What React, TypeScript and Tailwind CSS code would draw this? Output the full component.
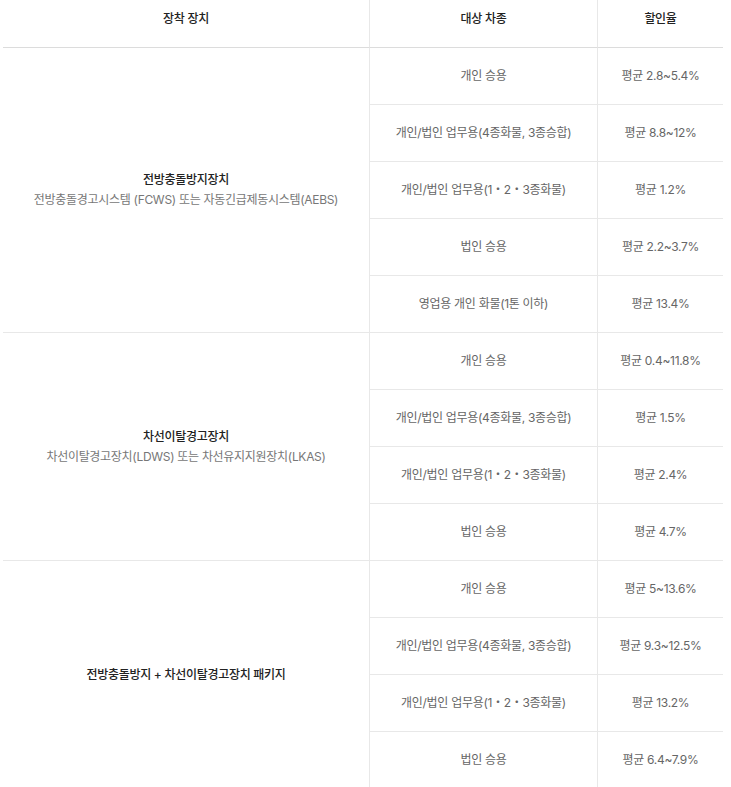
import React from "react";

type Group = { title: string; sub?: string; rows: [string, string][] };

const groups: Group[] = [
  {
    title: "전방충돌방지장치",
    sub: "전방충돌경고시스템 (FCWS) 또는 자동긴급제동시스템(AEBS)",
    rows: [
      ["개인 승용", "평균 2.8~5.4%"],
      ["개인/법인 업무용(4종화물, 3종승합)", "평균 8.8~12%"],
      ["개인/법인 업무용(1・2・3종화물)", "평균 1.2%"],
      ["법인 승용", "평균 2.2~3.7%"],
      ["영업용 개인 화물(1톤 이하)", "평균 13.4%"],
    ],
  },
  {
    title: "차선이탈경고장치",
    sub: "차선이탈경고장치(LDWS) 또는 차선유지지원장치(LKAS)",
    rows: [
      ["개인 승용", "평균 0.4~11.8%"],
      ["개인/법인 업무용(4종화물, 3종승합)", "평균 1.5%"],
      ["개인/법인 업무용(1・2・3종화물)", "평균 2.4%"],
      ["법인 승용", "평균 4.7%"],
    ],
  },
  {
    title: "전방충돌방지 + 차선이탈경고장치 패키지",
    rows: [
      ["개인 승용", "평균 5~13.6%"],
      ["개인/법인 업무용(4종화물, 3종승합)", "평균 9.3~12.5%"],
      ["개인/법인 업무용(1・2・3종화물)", "평균 13.2%"],
      ["법인 승용", "평균 6.4~7.9%"],
    ],
  },
];

export default function App() {
  return (
    <div
      className="bg-white w-[731px] h-[787px] overflow-hidden pl-[3px]"
      style={{ fontFamily: 'Inter, "Noto Sans CJK KR", sans-serif' }}
    >
      <table className="w-[720px] table-fixed border-separate border-spacing-0 text-[12px] tracking-[-0.3px]">
        <colgroup>
          <col className="w-[367px]" />
          <col className="w-[228px]" />
          <col className="w-[125px]" />
        </colgroup>
        <thead>
          <tr>
            <th className="h-[48px] pb-[10px] border-b border-r border-[#dcdcdc] border-r-[#e8e8e8] font-medium text-[#222] text-center align-middle">
              장착 장치
            </th>
            <th className="h-[48px] pb-[10px] border-b border-r border-[#dcdcdc] border-r-[#e8e8e8] font-medium text-[#222] text-center align-middle">
              대상 차종
            </th>
            <th className="h-[48px] pb-[10px] border-b border-[#dcdcdc] font-medium text-[#222] text-center align-middle">
              할인율
            </th>
          </tr>
        </thead>
        <tbody>
          {groups.map((g, gi) =>
            g.rows.map((r, ri) => (
              <tr key={`${gi}-${ri}`}>
                {ri === 0 && (
                  <td
                    rowSpan={g.rows.length}
                    className="border-b border-r border-[#e8e8e8] text-center align-middle leading-[20px]"
                  >
                    <div className="font-medium text-[#222]">{g.title}</div>
                    {g.sub && <div className="text-[#777]">{g.sub}</div>}
                  </td>
                )}
                <td className="h-[57px] border-b border-r border-[#e8e8e8] text-center align-middle text-[#666]">
                  {r[0]}
                </td>
                <td className="h-[57px] border-b border-[#e8e8e8] text-center align-middle text-[#666]">
                  {r[1]}
                </td>
              </tr>
            ))
          )}
        </tbody>
      </table>
    </div>
  );
}
